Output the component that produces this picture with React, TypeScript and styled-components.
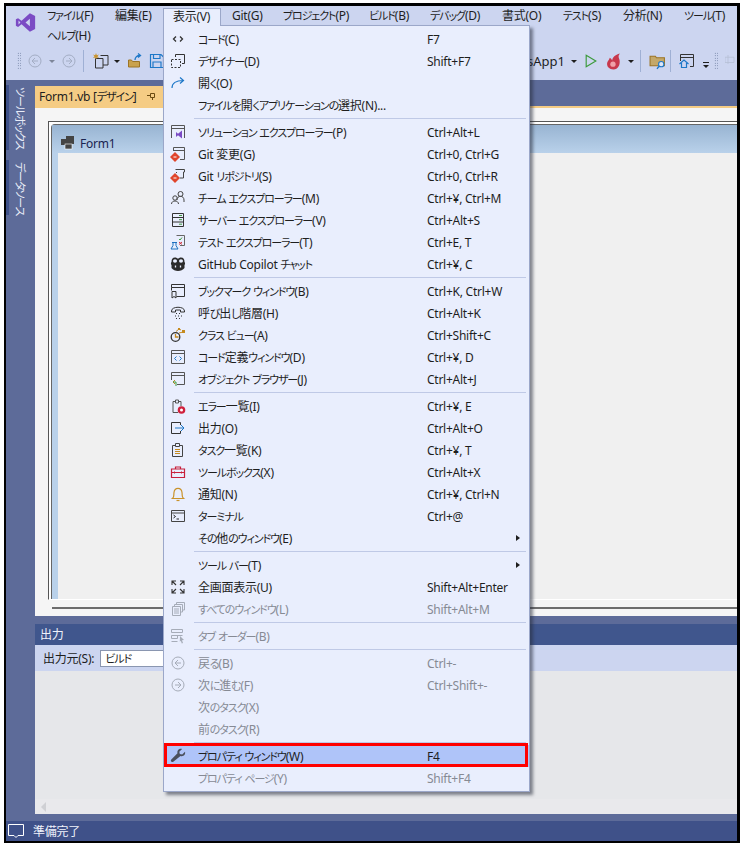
import React from 'react';
import styled, { createGlobalStyle } from 'styled-components';

const Global = createGlobalStyle`
  html, body { margin: 0; padding: 0; background: #fff; }
  body { font-family: "Noto Sans", "Noto Sans CJK JP", sans-serif; font-size: 12px; letter-spacing: -0.25px; font-feature-settings: "palt"; color: #1e1e1e; }
  #root { width: 743px; height: 845px; overflow: hidden; }
`;

const Page = styled.div`
  position: relative; width: 743px; height: 845px; box-sizing: border-box;
  padding: 3px 3px 2px 4px;
`;
const Frame = styled.div`
  box-sizing: border-box; height: 840px; display: flex; flex-direction: column;
  border: solid #000; border-width: 3px 3px 2px 2px; background: #5d6b99; overflow: hidden;
`;
const Header = styled.header`
  background: #ccd5f0; height: 74px; flex: none; display: flex; flex-direction: column;
`;
const MenuRows = styled.div` display: flex; height: 40px; `;
const LogoBox = styled.div` width: 31px; flex: none; padding: 6px 0 0 9px; box-sizing: border-box; `;
const MenuItems = styled.div` display: flex; flex-wrap: wrap; align-content: flex-start; gap: 0 1px; flex: 1; `;
const MenuItem = styled.div<{ $w: number; $active?: boolean }>`
  box-sizing: border-box; width: ${p => p.$w}px; height: 20px; line-height: 20px; padding-left: 10px; white-space: nowrap;
  ${p => p.$active ? `position: relative; z-index: 3; margin-top: 2px; height: 18px; line-height: 16px; padding-left: 9px; background: #e9eefd; border: 1px solid #9ba7c9; border-bottom: none;` : ''}
`;
const Toolbar = styled.div` height: 30px; margin-bottom: 4px; display: flex; justify-content: space-between; align-items: center; `;
const ToolGroup = styled.div` display: flex; align-items: center; `;
const Tool = styled.svg<{ $gap?: number }>`
  flex: none; margin-left: ${p => p.$gap ?? 0}px; display: block;
`;
const Grip = styled.div<{ $gap: number }>`
  width: 4px; height: 18px; margin-left: ${p => p.$gap}px;
  background-image: radial-gradient(#5a6a90 0.7px, transparent 0.8px);
  background-size: 2.5px 2.5px;
`;
const Caret = styled.div<{ $gap: number; $dim?: boolean }>`
  width: 0; height: 0; margin-left: ${p => p.$gap}px; border: 3px solid transparent; border-top: 3px solid ${p => p.$dim ? '#7d8699' : '#1e1e1e'}; border-bottom: none;
`;
const ToolSep = styled.div<{ $gap: number }>` width: 1px; height: 22px; background: #9fb0d4; margin-left: ${p => p.$gap}px; `;
const ProjectName = styled.div` white-space: nowrap; font-size: 13px; letter-spacing: 0; `;
const Overflow = styled.div`
  margin-left: 8px; width: 6px; height: 7px; margin-top: 9px; border-top: 1px solid #1e1e1e; position: relative;
  &::after { content: ""; position: absolute; left: 0; top: 2px; border: 3px solid transparent; border-top: 3px solid #1e1e1e; border-bottom: none; }
`;
const Workspace = styled.div` flex: 1; display: flex; min-height: 0; `;
const Rail = styled.aside` width: 29px; flex: none; padding-top: 5px; display: flex; flex-direction: column; gap: 10px; `;
const RailTab = styled.div<{ $h: number }>`
  align-self: flex-start; height: ${p => p.$h}px; box-sizing: border-box; border-left: 3px solid #3f5189; padding: 2px 0 0 3px;
  writing-mode: vertical-rl; text-orientation: sideways; color: #e8ecf8; font-size: 12px; line-height: 17px; white-space: nowrap;
`;
const Main = styled.main` flex: 1; min-width: 0; display: flex; flex-direction: column; padding-top: 6px; `;
const TabStrip = styled.div` height: 22px; flex: none; border-bottom: 2px solid #f5cc84; box-sizing: border-box; `;
const DocTab = styled.div`
  width: 140px; height: 20px; background: #f5cc84; padding-left: 4px; box-sizing: border-box; display: flex; align-items: center; gap: 11px; white-space: nowrap;
`;
const Doc = styled.section`
  flex: 1; min-height: 0; background: #f5f5f5; padding: 13px 0 7px 13px; display: flex; flex-direction: column;
`;
const Selection = styled.div`
  flex: 1; min-height: 0; border-top: 1px solid #555; border-left: 1px solid #555; border-bottom: 1px solid #fff; padding: 2px 0 0 2px; background: #fff; display: flex;
`;
const WinFrame = styled.div`
  flex: 1; border-top: 1px solid #666; border-left: 1px solid #666; border-top-left-radius: 4px; display: flex; flex-direction: column; background: #b9d1ea;
`;
const WinTitle = styled.div`
  height: 28px; flex: none; background: linear-gradient(#98b4d2, #b9d1ea); display: flex; align-items: center; gap: 5px; padding: 8px 0 0 9px; box-sizing: border-box; color: #1a2450;
`;
const WinBody = styled.div` flex: 1; background: #f0f0f0; margin-left: 6px; `;
const Rule = styled.div` height: 2px; background: #6d6d6d; margin: 7px 0 0 4px; flex: none; `;
const Output = styled.section` flex: none; height: 190px; margin-top: 8px; display: flex; flex-direction: column; `;
const OutTitle = styled.div` height: 21px; flex: none; background: #40568d; color: #f0f3fb; padding-left: 5px; line-height: 21px; `;
const OutBar = styled.div` height: 26px; flex: none; background: #ccd5f0; display: flex; align-items: center; gap: 6px; padding-left: 8px; `;
const Combo = styled.div` width: 240px; height: 17px; background: #fff; border: 1px solid #8a96b0; box-sizing: border-box; line-height: 15px; padding-left: 4px; `;
const OutBody = styled.div` flex: 1; background: #e6e7ea; position: relative; `;
const ScrollLine = styled.div`
  position: absolute; left: 0; right: 0; bottom: 0; height: 15px; background: #e9e9ec;
  &::before { content: ""; position: absolute; left: 6px; top: 3px; border: 5px solid transparent; border-left: none; border-right: 5px solid #cfd0d4; }
`;
const Gap = styled.div` height: 7px; flex: none; `;
const Status = styled.footer` height: 20px; flex: none; background: #3f5189; color: #f0f3fb; display: flex; align-items: center; gap: 8px; padding-left: 1px; `;

const Dropdown = styled.nav`
  position: absolute; left: 163px; top: 25px; width: 367px; height: 767px; box-sizing: border-box; z-index: 2;
  background: #e9eefd; border: 1px solid #9ba7c9; padding: 2px 0; box-shadow: 3px 3px 3px rgba(40,45,60,.55);
`;
const Row = styled.div<{ $off?: boolean; $hl?: boolean }>`
  position: relative; height: 22px; display: grid; grid-template-columns: 34px 229px 1fr; align-items: center; white-space: nowrap;
  color: ${p => p.$off ? '#868a94' : '#1e1e1e'};
  background: ${p => p.$hl ? '#afc4f9' : 'transparent'};
  ${p => p.$hl ? `&::after { content: ""; position: absolute; left: 0; right: 1px; top: -2px; bottom: 0; border: 3px solid #f00; }` : ''}
`;
const IconCell = styled.div` display: flex; justify-content: flex-start; padding-left: 6px; `;
const Sub = styled.div`
  position: absolute; left: 352px; top: 8px; border: 3px solid transparent; border-left: 4px solid #1e1e1e; border-right: none;
`;
const Sep = styled.div` height: 1px; margin: 2px 3px 2px 30px; background: #bfc9e6; `;
const Kana = styled.span` font-size: 11px; letter-spacing: -1.1px; `;

/* Splits a string so that runs of kana get the condensed look of the UI font. */
const Jp = ({ t }: { t: string }) => (
  <>
    {t.split(/([\u3040-\u30ff]+)/).map((part, i) =>
      i % 2 ? <Kana key={i}>{part}</Kana> : <React.Fragment key={i}>{part}</React.Fragment>
    )}
  </>
);

const I = ({ children, s = 16, gap }: { children?: React.ReactNode; s?: number; gap?: number }) => (
  <Tool $gap={gap} width={s} height={s} viewBox="0 0 16 16" fill="none">{children}</Tool>
);

const D = '#333';
const icons: Record<string, React.ReactNode> = {
  code: <path d="M6 5.5 3.5 8 6 10.5M10 5.5 12.5 8 10 10.5" stroke={D} strokeWidth="1.3" />,
  designer: <><path d="M5.5 4V1.500h9v9H12" stroke={D} /><path d="M1.500 6.500h9v8h-9z" stroke={D} strokeDasharray="2 1.500" /></>,
  open: <path d="M2 13C2 8 6 5.500 13 5.500M10 2.500l3.500 3-3.500 3" stroke="#1e78c8" strokeWidth="1.200" />,
  sln: <><path d="M1.500 14V1.500h13V14" stroke="#555" /><path d="M1.500 4.500h13" stroke="#555" /><path d="M6 8l2 1.800L12 6.500v8L8 11.200 6 13z" fill="#7b4bc4" /></>,
  gitc: <><path d="M3.500 5V1.500h11v12H10M3.500 4.500h11" stroke="#555" /><path d="M5 6l5 5-5 5-5-5z" fill="#e0452c" /><path d="M3.500 11h3" stroke="#fff" /></>,
  gitr: <><path d="M5.500 1.500h9v2.500h-1v6H10M6.500 4v1" stroke="#444" /><path d="M5 5l5 5-5 5-5-5z" fill="#e0452c" /><path d="M3.500 10h3" stroke="#fff" /></>,
  team: <><circle cx="10.500" cy="4" r="2.500" stroke="#444" /><path d="M7 10c0-5 7-5 7 0v2" stroke="#444" /><circle cx="5" cy="8" r="2.200" stroke="#444" /><path d="M1.500 14c0-4 7-4 7 0" stroke="#444" /></>,
  server: <><path d="M2.500 1.500h11v13h-11zM2.500 5.500h11M2.500 10h11" stroke={D} /><path d="M9 3.500h3M9 7.700h3M9 12.200h3" stroke="#3f9a3f" /></>,
  test: <><path d="M6.500 1.500h8v10H10" stroke="#666" /><path d="M2 8.500h5M3 8.500v3l-2 3.500h7l-2-3.500v-3" stroke="#1e70c0" /><path d="M9 5l1 1 2-2.500" stroke="#3f9a3f" /><path d="M9 8l3 2.500M12 8l-3 2.500" stroke="#d0303c" /></>,
  copilot: <><path d="M1.500 9C.5 8 1 6.500 1.500 6c0-3 1-4.500 3.500-4.500C6.200 1.500 7.400 2 8 3c.6-1 1.800-1.500 3-1.500 2.500 0 3.500 1.500 3.500 4.500.5.500 1 2 0 3v3c-1.500 2-4 3-6.500 3s-5-1-6.500-3z" fill="#2b2b2b" /><ellipse cx="5" cy="5" rx="2" ry="1.800" fill="#e9eefd" /><ellipse cx="11" cy="5" rx="2" ry="1.800" fill="#e9eefd" /><path d="M5.500 9.500v2M10.500 9.500v2" stroke="#e9eefd" strokeWidth="1.300" /></>,
  bookmark: <><path d="M6.500 13.500h8v-12h-13v3h13M1.500 4.500v3" stroke={D} /><path d="M2 8.500h4v6.500l-2-1.500L2 15z" stroke={D} /></>,
  call: <><path d="M1.500 6c0-5 13-5 13 0v1h-4V5h-5v2h-4z" stroke={D} /><path d="M6 8.500h1M9 8.500h1M5 11h1M8 11h1M11 11h1M6 13.500h1M9 13.500h1" stroke={D} strokeWidth="1.200" /></>,
  cls: <><circle cx="5.500" cy="10" r="4.300" stroke={D} strokeWidth="1.300" /><path d="M5.500 7v3h3" stroke="#c58a1e" strokeWidth="1.300" /><path d="M6 4.500 9 2l2 1M9 6l4-1" stroke="#c58a1e" /><rect x="12" y="3" width="3" height="3" fill="#c58a1e" /><rect x="8" y="1" width="2" height="2" fill="#c58a1e" /></>,
  def: <><path d="M1.500 1.500h13v13h-13zM1.500 4.500h13" stroke="#555" /><path d="M6.500 7.500 4.500 9.500l2 2M9.500 7.500l2 2-2 2" stroke="#1e78c8" /></>,
  obj: <><path d="M1.500 9V1.500h13v12H7M1.500 4.500h13" stroke="#555" /><path d="M5 9 3 11l2 2" stroke="#c58a1e" /><path d="M3 11h3v4" stroke="#3f9a3f" /></>,
  err: <><path d="M5.500 3.500H3v11h5M8.500 3.500H11V8M5.500 2h3v3h-3z" stroke="#555" /><circle cx="11.500" cy="12" r="3.800" fill="#d0203c" /><circle cx="11.500" cy="12" r="1.500" fill="#fff" /></>,
  out: <><path d="M10.500 5V2.500h-9v11h9V11" stroke={D} /><path d="M5 8h9M11 5l3 3-3 3" stroke="#1e78c8" /></>,
  task: <><path d="M5 3.500H2.500v11h10v-11H10M5.500 1.500h4v3h-4z" stroke="#444" /><path d="M5 7.500h5M5 9.500h5M5 11.500h5" stroke="#c58a1e" strokeWidth="1.200" /></>,
  box: <><path d="M1.500 5h13v8.500h-13zM1.500 8.500h13M5.500 5V3h5v2" stroke="#c8203c" strokeWidth="1.200" /><path d="M4.500 7.500v2M11.500 7.500v2" stroke="#c8203c" /></>,
  bell: <><path d="M2.500 12.500c2-1.500 1-3 1.500-6 .5-5.500 7.500-5.500 8 0 .5 3-.5 4.500 1.500 6z" stroke="#c9922a" strokeWidth="1.200" /><path d="M6.500 14.500h3" stroke="#c9922a" strokeWidth="1.200" /></>,
  term: <><path d="M1.500 2.500h13v11h-13zM1.500 5h13" stroke="#444" /><path d="M3.500 7l2 1.500-2 1.500M6.500 11h2.500" stroke="#222" /></>,
  full: <path d="M2 6V2h4M2 2l4 4M14 6V2h-4M14 2l-4 4M2 10v4h4M2 14l4-4M14 10v4h-4M14 14l-4-4" stroke={D} strokeWidth="1.100" />,
  all: <path d="M6.500 4V1.500h8V9H12M4.500 6V3.500h8V11H10M2.500 5.500h8v9h-8zM4 8h5M4 10h5M4 12h5" stroke="#a6acb8" />,
  order: <><path d="M1.500 1.500h11v3h-11zM4.500 7.500h8M1.500 7.500h6v3h-6zM1.500 13.500h6" stroke="#a6acb8" /><path d="M10 8l4 4-2 .3 1 2.700-1.200.5-1-2.700-1 1z" fill="#a6acb8" /></>,
  back: <><circle cx="8" cy="8" r="6" stroke="#a6acb8" /><path d="M8 5 5 8l3 3M5 8h6" stroke="#a6acb8" /></>,
  fwd: <><circle cx="8" cy="8" r="6" stroke="#a6acb8" /><path d="M8 5l3 3-3 3M11 8H5" stroke="#a6acb8" /></>,
  wrench: <path d="M15 3.800 12.200 6.500 9.800 6 9.300 3.800 12.100 1C9.500 0 6.700 2.300 7.500 5.300L1.300 11.500c-1.300 1.300.4 3.500 2 2.200L10.500 8C13.200 9 15.800 6.700 15 3.800z" fill="#4a4f5c" />,
};

type It = { i?: string; t: string; k?: string; off?: boolean; sub?: boolean; hl?: boolean };
const groups: It[][] = [
  [{ i: 'code', t: 'コード(C)', k: 'F7' }, { i: 'designer', t: 'デザイナー(D)', k: 'Shift+F7' }, { i: 'open', t: '開く(O)' }, { t: 'ファイルを開くアプリケーションの選択(N)...' }],
  [{ i: 'sln', t: 'ソリューション エクスプローラー(P)', k: 'Ctrl+Alt+L' }, { i: 'gitc', t: 'Git 変更(G)', k: 'Ctrl+0, Ctrl+G' }, { i: 'gitr', t: 'Git リポジトリ(S)', k: 'Ctrl+0, Ctrl+R' }, { i: 'team', t: 'チーム エクスプローラー(M)', k: 'Ctrl+¥, Ctrl+M' }, { i: 'server', t: 'サーバー エクスプローラー(V)', k: 'Ctrl+Alt+S' }, { i: 'test', t: 'テスト エクスプローラー(T)', k: 'Ctrl+E, T' }, { i: 'copilot', t: 'GitHub Copilot チャット', k: 'Ctrl+¥, C' }],
  [{ i: 'bookmark', t: 'ブックマーク ウィンドウ(B)', k: 'Ctrl+K, Ctrl+W' }, { i: 'call', t: '呼び出し階層(H)', k: 'Ctrl+Alt+K' }, { i: 'cls', t: 'クラス ビュー(A)', k: 'Ctrl+Shift+C' }, { i: 'def', t: 'コード定義ウィンドウ(D)', k: 'Ctrl+¥, D' }, { i: 'obj', t: 'オブジェクト ブラウザー(J)', k: 'Ctrl+Alt+J' }],
  [{ i: 'err', t: 'エラー一覧(I)', k: 'Ctrl+¥, E' }, { i: 'out', t: '出力(O)', k: 'Ctrl+Alt+O' }, { i: 'task', t: 'タスク一覧(K)', k: 'Ctrl+¥, T' }, { i: 'box', t: 'ツールボックス(X)', k: 'Ctrl+Alt+X' }, { i: 'bell', t: '通知(N)', k: 'Ctrl+¥, Ctrl+N' }, { i: 'term', t: 'ターミナル', k: 'Ctrl+@' }, { t: 'その他のウィンドウ(E)', sub: true }],
  [{ t: 'ツール バー(T)', sub: true }, { i: 'full', t: '全画面表示(U)', k: 'Shift+Alt+Enter' }, { i: 'all', t: 'すべてのウィンドウ(L)', k: 'Shift+Alt+M', off: true }],
  [{ i: 'order', t: 'タブ オーダー(B)', off: true }],
  [{ i: 'back', t: '戻る(B)', k: 'Ctrl+-', off: true }, { i: 'fwd', t: '次に進む(F)', k: 'Ctrl+Shift+-', off: true }, { t: '次のタスク(X)', off: true }, { t: '前のタスク(R)', off: true }],
  [{ i: 'wrench', t: 'プロパティ ウィンドウ(W)', k: 'F4', hl: true }, { t: 'プロパティ ページ(Y)', k: 'Shift+F4', off: true }],
];

const menus: [string, number, boolean?][] = [
  ['ファイル(F)', 67], ['編集(E)', 57], ['表示(V)', 58, true], ['Git(G)', 50], ['プロジェクト(P)', 85], ['ビルド(B)', 60], ['デバッグ(D)', 71], ['書式(O)', 60], ['テスト(S)', 59], ['分析(N)', 60], ['ツール(T)', 53], ['ヘルプ(H)', 65],
];

const DIM = '#a3adc4';

export default function App() {
  return (
    <Page>
      <Global />
      <Frame>
        <Header>
          <MenuRows>
            <LogoBox>
              <svg width="21" height="21" viewBox="0 0 24 24"><path fillRule="evenodd" fill="#7b4bc4" d="M17 1.500 23 4.500v15L17 22.500 7.500 14 3.500 17 1 15.700V8.300L3.500 7 7.500 10zM17 7.800 12 12l5 4.200zM4 9.800v4.400L6.200 12z" /></svg>
            </LogoBox>
            <MenuItems>
              {menus.map(([t, w, a]) => <MenuItem key={t} $w={w} $active={a}><Jp t={t} /></MenuItem>)}
            </MenuItems>
          </MenuRows>
          <Toolbar>
            <ToolGroup>
              <Grip $gap={11} />
              <I gap={6}><circle cx="8" cy="8" r="6" stroke={DIM} /><path d="M8 5 5 8l3 3M5 8h6" stroke={DIM} /></I>
              <Caret $gap={6} $dim />
              <I gap={6}><circle cx="8" cy="8" r="6" stroke={DIM} /><path d="M8 5l3 3-3 3M11 8H5" stroke={DIM} /></I>
              <ToolSep $gap={6} />
              <I gap={9}><path d="M7.500 2.500h7.500v9.500H10" stroke="#333" /><path d="M2.500 5.500h7.500v9.500H2.500z" stroke="#333" /><path d="M3 0l.8 2.200L6 1.500 4.500 3.300 6 5 3.800 4.500 3 6.500 2.200 4.500 0 5l1.500-1.700L0 1.500l2.200.7z" fill="#c9922a" /></I>
              <Caret $gap={5} />
              <I gap={7}><path d="M1.500 14V7h3l1 1.500h7V14z" fill="#c9a24e" stroke="#9c7425" /><path d="M8 7c0-3 2-4.500 5-4.500M11 .5l2.500 2L11 4.500" stroke="#1e78c8" strokeWidth="1.300" /></I>
              <I gap={6}><path d="M1.500 1.500h10.500l2.500 2.500v10.500h-13zM4.500 1.500v4h6.500v-4M4 14.500V9h8v5.500" stroke="#1e78c8" strokeWidth="1.200" /></I>
            </ToolGroup>
            <ToolGroup>
              <ProjectName>nsApp1</ProjectName>
              <Caret $gap={6} />
              <I gap={7} s={14}><path d="M2.500 1.500v13l11-6.500z" stroke="#3a9a3a" strokeWidth="1.300" /></I>
              <I gap={7} s={17}><path d="M8 15.500c-4 0-6.500-2.500-6-6 .3-2 2-3 2.500-5C6 5.500 6.500 6.500 6.800 7 7 4 9.500 2 14 .5c-2 2.500-1 4-.3 6 .8 4.500-1.500 9-5.700 9z" fill="#c8384c" /><circle cx="7.500" cy="10.500" r="2.500" fill="#f0a0a8" /></I>
              <Caret $gap={6} />
              <ToolSep $gap={6} />
              <I gap={8} s={17}><path d="M1 3h5l1 1.500h7.500V12H1z" fill="#c4a86a" stroke="#9c7425" /><circle cx="11.500" cy="10.500" r="2.500" stroke="#1e78c8" fill="#dfe7f7" /><path d="M9.500 12.500 7.500 15" stroke="#1e78c8" strokeWidth="1.300" /></I>
              <ToolSep $gap={4} />
              <I gap={8} s={16}><path d="M1.500 8V1.500h13v12H11M1.500 4.500h13" stroke="#333" /><path d="M.5 11 5 7l4.500 4M2.500 10v4.500h5V10" stroke="#1e78c8" strokeWidth="1.200" /></I>
              <Overflow />
              <Grip $gap={5} />
              <I gap={7} s={12}><path d="M0 3h12v7H0zM4 0v12" stroke="#b4bdd4" /></I>
            </ToolGroup>
          </Toolbar>
        </Header>
        <Workspace>
          <Rail>
            <RailTab $h={65}><Jp t="ツールボックス" /></RailTab>
            <RailTab $h={55}><Jp t="データソース" /></RailTab>
          </Rail>
          <Main>
            <TabStrip>
              <DocTab><span>Form1.vb [<Jp t="デザイン" />]</span>
                <svg width="10" height="10" viewBox="0 0 10 10" fill="none"><path d="M3.500 2.500h4v4h-4zM3.500 4.500H0M5.500 6.500V9" stroke="#6a4a10" /></svg>
              </DocTab>
            </TabStrip>
            <Doc>
              <Selection>
                <WinFrame>
                  <WinTitle>
                    <svg width="14" height="14" viewBox="0 0 14 14"><rect x="5" y="0" width="8" height="8" fill="#444" /><rect x="0" y="3" width="5" height="6" fill="#444" /><rect x="4" y="8" width="7" height="5" fill="#444" stroke="#fff" strokeWidth=".6" /></svg>
                    Form1
                  </WinTitle>
                  <WinBody />
                </WinFrame>
              </Selection>
              <Rule />
            </Doc>
            <Output>
              <OutTitle>出力</OutTitle>
              <OutBar>出力元(S): <Combo><Jp t="ビルド" /></Combo></OutBar>
              <OutBody><ScrollLine /></OutBody>
            </Output>
            <Gap />
          </Main>
        </Workspace>
        <Status>
          <svg width="18" height="16" viewBox="0 0 18 16" fill="none"><path d="M1.500 1.500h15v11h-5.500l-2 2-2-2h-5.500z" stroke="#fff" /></svg>
          準備完了
        </Status>
      </Frame>
      <Dropdown>
        {groups.map((g, gi) => (
          <React.Fragment key={gi}>
            {gi > 0 && <Sep />}
            {g.map(it => (
              <Row key={it.t} $off={it.off} $hl={it.hl}>
                <IconCell>{it.i ? <I>{icons[it.i]}</I> : null}</IconCell>
                <span><Jp t={it.t} /></span>
                <span>{it.k}</span>
                {it.sub && <Sub />}
              </Row>
            ))}
          </React.Fragment>
        ))}
      </Dropdown>
    </Page>
  );
}
